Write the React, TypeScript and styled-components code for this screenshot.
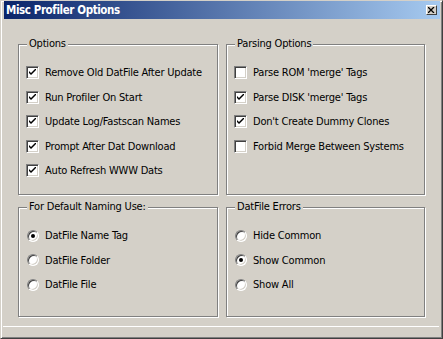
import styled, { createGlobalStyle } from "styled-components";

const GlobalStyle = createGlobalStyle`
  html, body {
    margin: 0;
    padding: 0;
    background: #d4d0c8;
  }
`;

const Window = styled.div`
  width: 443px;
  height: 339px;
  box-sizing: border-box;
  background: #d4d0c8;
  border-top: 1px solid #d4d0c8;
  border-left: 1px solid #d4d0c8;
  border-right: 1px solid #404040;
  border-bottom: 1px solid #404040;
  box-shadow: inset 1px 1px 0 #fff, inset -1px -1px 0 #808080;
  padding: 0 2px 0 2px;
  font-family: "DejaVu Sans Condensed", "DejaVu Sans", sans-serif;
  font-stretch: condensed;
  font-size: 11px;
  letter-spacing: -0.2px;
  color: #000;
  display: flex;
  flex-direction: column;
`;

const TitleBar = styled.div`
  height: 18px;
  margin-left: 1px;
  background: linear-gradient(to right, #0a246a, #a6caf0);
  display: flex;
  align-items: center;
  justify-content: space-between;
  padding: 0 3px 0 2px;
`;

const Title = styled.span`
  color: #fff;
  font-weight: bold;
  font-size: 11.5px;
  letter-spacing: -0.4px;
`;

const CloseButton = styled.div`
  width: 11px;
  height: 10px;
  box-sizing: border-box;
  background: #d4d0c8;
  border-top: 1px solid #fff;
  border-left: 1px solid #fff;
  border-right: 1px solid #404040;
  border-bottom: 1px solid #404040;
  display: flex;
  align-items: center;
  justify-content: center;
`;

const Body = styled.div`
  height: 308px;
  box-sizing: border-box;
  display: grid;
  grid-template-columns: 200px 199px;
  grid-template-rows: 151px 110px;
  column-gap: 8px;
  row-gap: 12px;
  padding: 25px 0 0 15px;
  border-bottom: 1px solid #fff;
  margin-right: 1px;
`;

const Group = styled.div`
  position: relative;
  border: 1px solid #808080;
  box-shadow: inset 1px 1px 0 #fff, 1px 1px 0 #fff;
  padding: 21px 0 0 7px;
  display: flex;
  flex-direction: column;
  gap: 11.5px;
`;

const Legend = styled.span`
  position: absolute;
  top: -8px;
  left: 8px;
  padding: 0 2px;
  background: #d4d0c8;
  line-height: 14px;
`;

const Row = styled.label`
  display: flex;
  align-items: center;
  gap: 6px;
  height: 13px;
  white-space: nowrap;
`;

const CheckBox = styled.span`
  width: 13px;
  height: 13px;
  box-sizing: border-box;
  flex: none;
  background: #fff;
  border-top: 1px solid #808080;
  border-left: 1px solid #808080;
  border-right: 1px solid #fff;
  border-bottom: 1px solid #fff;
  box-shadow: inset 1px 1px 0 #404040, inset -1px -1px 0 #d4d0c8;
  display: flex;
  align-items: center;
  justify-content: center;
`;

const Radio = styled.span`
  width: 12px;
  height: 12px;
  box-sizing: border-box;
  flex: none;
  border-radius: 50%;
  background: #fff;
  border-top: 1px solid #808080;
  border-left: 1px solid #808080;
  border-right: 1px solid #fff;
  border-bottom: 1px solid #fff;
  box-shadow: inset 1px 1px 0 #404040, inset -1px -1px 0 #d4d0c8;
  display: flex;
  align-items: center;
  justify-content: center;
  margin-left: 1px;
`;

const Dot = styled.span`
  width: 4px;
  height: 4px;
  border-radius: 50%;
  background: #000;
`;

const Check = () => (
  <svg width="7" height="7" viewBox="0 0 7 7">
    <path d="M0 2 V4 L2 6 L7 1 V-1 L2 4 Z" fill="#000" />
  </svg>
);

const CheckItem = ({ label, checked }: { label: string; checked?: boolean }) => (
  <Row>
    <CheckBox>{checked && <Check />}</CheckBox>
    {label}
  </Row>
);

const RadioItem = ({ label, checked }: { label: string; checked?: boolean }) => (
  <Row>
    <Radio>{checked && <Dot />}</Radio>
    {label}
  </Row>
);

export default function App() {
  return (
    <>
      <GlobalStyle />
      <Window>
        <TitleBar>
          <Title>Misc Profiler Options</Title>
          <CloseButton>
            <svg width="7" height="6" viewBox="0 0 7 6">
              <path d="M0 0 L6 6 M6 0 L0 6" stroke="#000" strokeWidth="1.3" />
            </svg>
          </CloseButton>
        </TitleBar>
        <Body>
          <Group>
            <Legend>Options</Legend>
            <CheckItem label="Remove Old DatFile After Update" checked />
            <CheckItem label="Run Profiler On Start" checked />
            <CheckItem label="Update Log/Fastscan Names" checked />
            <CheckItem label="Prompt After Dat Download" checked />
            <CheckItem label="Auto Refresh WWW Dats" checked />
          </Group>
          <Group>
            <Legend>Parsing Options</Legend>
            <CheckItem label="Parse ROM 'merge' Tags" />
            <CheckItem label="Parse DISK 'merge' Tags" checked />
            <CheckItem label="Don't Create Dummy Clones" checked />
            <CheckItem label="Forbid Merge Between Systems" />
          </Group>
          <Group>
            <Legend>For Default Naming Use:</Legend>
            <RadioItem label="DatFile Name Tag" checked />
            <RadioItem label="DatFile Folder" />
            <RadioItem label="DatFile File" />
          </Group>
          <Group>
            <Legend>DatFile Errors</Legend>
            <RadioItem label="Hide Common" />
            <RadioItem label="Show Common" checked />
            <RadioItem label="Show All" />
          </Group>
        </Body>
      </Window>
    </>
  );
}
